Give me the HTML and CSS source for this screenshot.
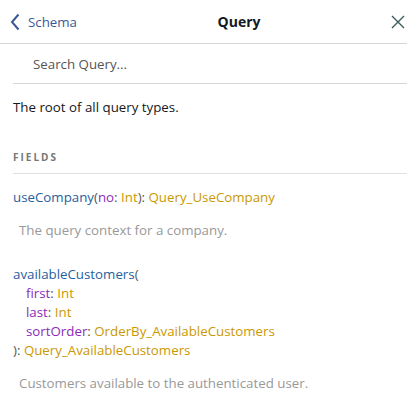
FILE: index.html
```html
<!DOCTYPE html>
<html>
<head>
<meta charset="utf-8">
<link rel="stylesheet" href="styles.css">
</head>
<body>
<div class="explorer">
  <div class="title-bar">
    <a class="back"><svg class="chev" width="10" height="18" viewBox="0 0 10 18"><path d="M8.5 1.5 L2 9 L8.5 16.5" fill="none" stroke="#3b5998" stroke-width="2"/></svg>Schema</a>
    <div class="title">Query</div>
    <div class="close"><svg width="14" height="14" viewBox="0 0 14 14"><path d="M1 1 L13 13 M13 1 L1 13" fill="none" stroke="#3a5a5a" stroke-width="1.4"/></svg></div>
  </div>
  <div class="contents">
    <div class="search"><span class="ph">Search Query...</span></div>
    <div class="doc">The root of all query types.</div>
    <div class="section-title">Fields</div>
    <div class="field">
      <div class="sig"><span class="fn">useCompany</span>(<span class="arg">no</span>: <span class="ty">Int</span>): <span class="ty">Query_UseCompany</span></div>
      <div class="fdesc">The query context for a company.</div>
    </div>
    <div class="field">
      <div class="sig"><span class="fn">availableCustomers</span>(</div>
      <div class="sig ind"><span class="arg">first</span>: <span class="ty">Int</span></div>
      <div class="sig ind"><span class="arg">last</span>: <span class="ty">Int</span></div>
      <div class="sig ind"><span class="arg">sortOrder</span>: <span class="ty">OrderBy_AvailableCustomers</span></div>
      <div class="sig">): <span class="ty">Query_AvailableCustomers</span></div>
      <div class="fdesc">Customers available to the authenticated user.</div>
    </div>
  </div>
</div>
</body>
</html>
```
FILE: styles.css
```css
html, body { margin: 0; padding: 0; background: #fff; }
body { font-family: "Open Sans", "Noto Sans", sans-serif; font-size: 13.3px; color: #141823; }
.explorer { width: 407px; height: 407px; overflow: hidden; }
.title-bar { height: 43px; border-bottom: 1px solid #d6d6d6; display: flex; align-items: center; }
.back { display: flex; align-items: center; color: #3b5998; font-size: 13.3px; padding-left: 10px; width: 99px; }
.chev { margin-right: 8px; }
.title { flex: 1; text-align: center; font-weight: bold; font-size: 14px; }
.close { width: 36px; display: flex; justify-content: flex-end; padding-right: 2px; }
.contents { padding: 0 0 0 13px; }
.search { border-bottom: 1px solid #d6d6d6; height: 39px; display: flex; align-items: center; padding-left: 20px; }
.ph { color: #555; }
.doc { margin-top: 14px; line-height: 18px; }
.section-title { margin-top: 34px; font-size: 10px; font-weight: bold; letter-spacing: 2px; text-transform: uppercase; color: #777; padding-bottom: 9px; border-bottom: 1px solid #e0e0e0; }
.field { margin-top: 14px; }
.sig { line-height: 19px; color: #555; }
.ind { padding-left: 13px; }
.fn { color: #1f61a0; }
.arg { color: #8b2bb9; }
.ty { color: #ca9800; }
.fdesc { color: #999; margin: 14px 0 26px 6px; line-height: 18px; }
```
